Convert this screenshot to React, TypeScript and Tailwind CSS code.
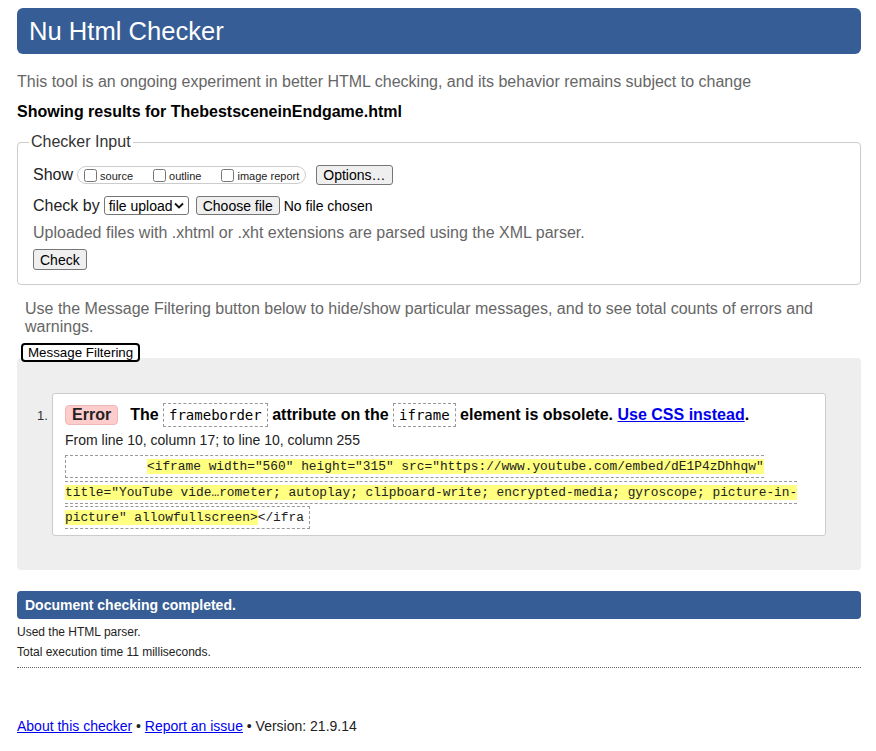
export default function App() {
  const btn =
    "inline-flex items-center justify-center bg-[#efefef] border border-[#767676] rounded-[3px] px-[6px] text-[14px] leading-none text-black";
  const code =
    "font-['DejaVu_Sans_Mono',monospace] font-normal text-[14px] border border-dashed border-[#999] px-[5px] py-[3px]";
  return (
    <div className="min-h-[751px] bg-white pl-[17px] pr-[15px] pt-2 pb-4 text-[#222] font-['Liberation_Sans',Arial,sans-serif]">
      <header className="h-[46px] rounded-[6px] bg-[#365d95] px-3 flex items-center">
        <h1 className="mt-[2px] text-[25.6px] text-white font-normal leading-none">Nu Html Checker</h1>
      </header>

      <p className="mt-[19px] text-[16px] leading-[18px] text-[#666]">
        This tool is an ongoing experiment in better HTML checking, and its behavior remains subject to change
      </p>
      <p className="mt-[12px] text-[16px] leading-[18px] font-bold text-black">
        Showing results for ThebestsceneinEndgame.html
      </p>

      <fieldset className="mt-[12px] border border-[#ccc] rounded-[4px] pl-[11px] pr-4 pb-[14px]">
        <legend className="px-[2px] text-[16px] leading-[18px] text-[#333]">Checker Input</legend>
        <div className="pl-[4px] pt-[14px]">
          <div className="flex items-center h-[20px]">
            <span className="text-[16px] leading-[18px]">Show</span>
            <span className="ml-[4px] inline-flex items-center h-[18px] rounded-[9px] border border-[#ccc] pl-[2px] pr-[6px] text-[11px] leading-none">
              <label className="flex items-center mr-4">
                <input type="checkbox" className="mt-[3px] mr-[3px] mb-[3px] ml-[4px]" />
                <span className="pt-[3px]">source</span>
              </label>
              <label className="flex items-center mr-4">
                <input type="checkbox" className="mt-[3px] mr-[3px] mb-[3px] ml-[4px]" />
                <span className="pt-[3px]">outline</span>
              </label>
              <label className="flex items-center">
                <input type="checkbox" className="mt-[3px] mr-[3px] mb-[3px] ml-[4px]" />
                <span className="pt-[3px]">image report</span>
              </label>
            </span>
            <button className={`${btn} ml-[10px] h-[20px]`}>Options…</button>
          </div>

          <div className="mt-[11px] flex items-center h-[19px]">
            <span className="text-[16px] leading-[18px]">Check by</span>
            <span className="ml-[4px] h-[19px] w-[85px] border border-[#767676] rounded-[3px] pl-[4px] pr-[4px] flex items-center justify-between text-[14px] leading-none text-black">
              <span>file upload</span>
              <svg width="10" height="7" viewBox="0 0 10 7" fill="none">
                <path d="M1 1.5 L5 5.5 L9 1.5" stroke="#111" strokeWidth="1.8" />
              </svg>
            </span>
            <button className={`${btn} ml-[7px] h-[19px]`}>Choose file</button>
            <span className="ml-[4px] text-[14px] leading-none text-black">No file chosen</span>
          </div>

          <p className="mt-[9px] text-[16px] leading-[18px] text-[#666]">
            Uploaded files with .xhtml or .xht extensions are parsed using the XML parser.
          </p>

          <div className="mt-[7px] flex">
            <button className={`${btn} h-[21px]`}>Check</button>
          </div>
        </div>
      </fieldset>

      <p className="mt-[15px] px-2 text-[16px] leading-[18px] text-[#666]">
        Use the Message Filtering button below to hide/show particular messages, and to see total counts of errors and warnings.
      </p>
      <div className="mt-[7px] flex">
        <button className="relative z-10 ml-[4px] h-[19px] border-2 border-black rounded-[4px] bg-white px-[5px] text-[13.33px] leading-[15px] text-black">
          Message Filtering
        </button>
      </div>

      <div className="-mt-[4px] rounded-[4px] bg-[#eee] pt-[35px] pb-[34px] pl-[20px] pr-[35px] flex">
        <span className="w-[15px] shrink-0 mt-[11px] text-[13px] leading-[24px] text-[#333]">1.</span>
        <div className="flex-1 bg-white border border-[#ccc] rounded-[3px] px-[12px] pt-[9px] pb-[4px]">
          <p className="text-[16px] leading-[24px] font-bold text-black">
            <span className="inline-block mr-[12px] rounded-[4px] bg-[#fcc] border border-[#efb9b9] px-[6px] leading-[18px] text-[#222]">
              Error
            </span>
            The <code className={code}>frameborder</code> attribute on the{" "}
            <code className={code}>iframe</code> element is obsolete.{" "}
            <a href="#" className="text-[#0000ee] underline">
              Use CSS instead
            </a>
            .
          </p>
          <p className="mt-[3px] text-[14px] leading-[20px]">From line 10, column 17; to line 10, column 255</p>
          <p className="mt-[4px] whitespace-nowrap font-['DejaVu_Sans_Mono',monospace] text-[12.85px] leading-[24.6px] text-[#222]">
            <code className="border border-dashed border-[#999] py-[3px] pr-[5px]">
              <span className="inline-block w-[81px]"></span>
              <mark className="bg-[#ffff80] text-[#222]">
                {'<iframe width="560" height="315" src="https://www.youtube.com/embed/dE1P4zDhhqw"'}
                <br />
                {'title="YouTube vide…rometer; autoplay; clipboard-write; encrypted-media; gyroscope; picture-in-'}
                <br />
                {'picture" allowfullscreen>'}
              </mark>
              {"</ifra"}
            </code>
          </p>
        </div>
      </div>

      <div className="mt-[21px] h-[28px] rounded-[4px] bg-[#365d95] px-2 text-white font-bold text-[14px] leading-[28px]">
        Document checking completed.
      </div>
      <div className="mt-[3px] pb-[5px] border-b border-dotted border-[#666] text-[12px] leading-[20px]">
        <p>Used the HTML parser.</p>
        <p>Total execution time 11 milliseconds.</p>
      </div>

      <p className="mt-[50px] text-[14px] leading-[16px]">
        <a href="#" className="text-[#0000ee] underline">About this checker</a> •{" "}
        <a href="#" className="text-[#0000ee] underline">Report an issue</a> • Version: 21.9.14
      </p>
    </div>
  );
}
